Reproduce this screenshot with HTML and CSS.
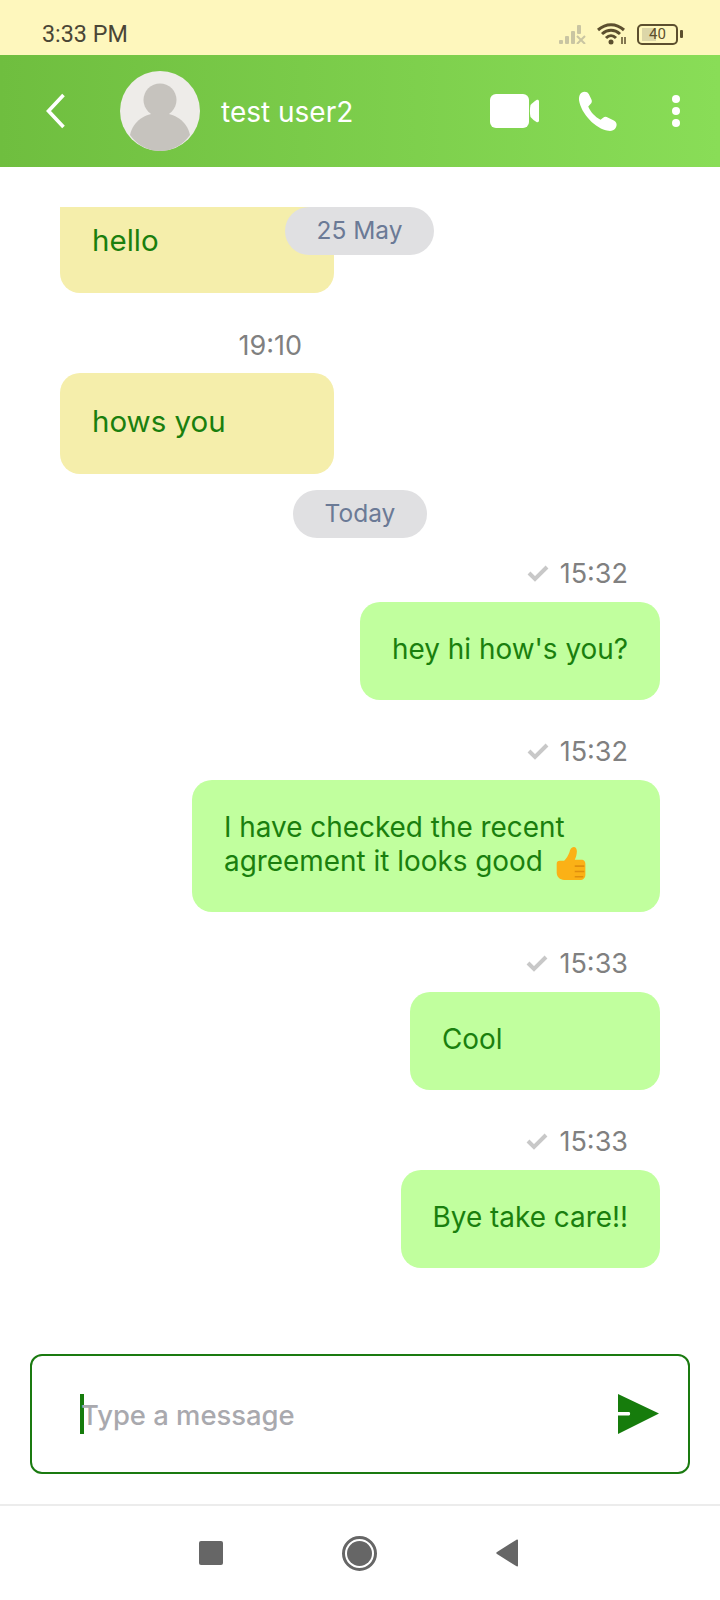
FILE: index.html
```html
<!DOCTYPE html>
<html lang="en">
<head>
    <meta charset="UTF-8">
    <meta name="viewport" content="width=device-width, initial-scale=1.0">
    <title>Chat</title>
    <link rel="stylesheet" href="styles.css">
</head>
<body>
    <div class="app">
        <!-- Status bar -->
        <div class="status">
            <span class="clock">3:33 PM</span>
            <div class="status-icons">
                <svg class="signal" width="28" height="20" viewBox="0 0 28 20">
                    <rect x="0" y="16" width="4" height="4" rx="1"/>
                    <rect x="6" y="12" width="4" height="8" rx="1"/>
                    <rect x="12" y="7" width="4" height="13" rx="1"/>
                    <rect x="18" y="1" width="4" height="9" rx="1"/>
                    <path d="M18 12l8 8M26 12l-8 8" stroke="#c9c5a2" stroke-width="2" fill="none"/>
                </svg>
                <svg class="wifi" width="30" height="22" viewBox="0 0 30 22">
                    <path d="M1 7c8-7 18-7 26 0M5 11c5.500-5 12.500-5 18 0M9 15c3-3 7-3 10 0" stroke="#5c4f2e" stroke-width="3" fill="none"/>
                    <circle cx="14" cy="19" r="2.500" fill="#5c4f2e"/>
                    <path d="M25 14v7M28 14v7" stroke="#5c4f2e" stroke-width="1.500"/>
                </svg>
                <div class="battery">
                    <div class="battery-body">
                        <div class="battery-fill"></div>
                        <span class="battery-num">40</span>
                    </div>
                    <div class="battery-tip"></div>
                </div>
            </div>
        </div>

        <!-- Header -->
        <header class="header">
            <svg class="back" width="20" height="36" viewBox="0 0 20 36">
                <path d="M17.500 2L2.500 18l15 16" stroke="#fff" stroke-width="3.600" fill="none"/>
            </svg>
            <svg class="avatar" width="80" height="80" viewBox="0 0 80 80">
                <circle cx="40" cy="40" r="40" fill="#eeece9"/>
                <circle cx="40" cy="29" r="16.500" fill="#c6c3be"/>
                <path d="M10 64c3-14 15-22 30-22s27 8 30 22c-7 10-18 16-30 16s-23-6-30-16z" fill="#c6c3be"/>
            </svg>
            <span class="name">test user2</span>
            <div class="header-icons">
                <svg width="49" height="36" viewBox="0 0 49 36">
                    <rect x="0" y="1" width="39" height="34" rx="6" fill="#fff"/>
                    <path d="M40.500 12c2-2 4-4 6-5 1.200-.6 2.500 0 2.500 1.500v19c0 1.500-1.300 2.100-2.500 1.500-2-1-4-3-6-5-.8-3.500-.8-8 0-12z" fill="#fff"/>
                </svg>
                <svg class="phone" width="41" height="41" viewBox="0 0 40 40">
                    <path d="M3 2c3-2 6-1.500 7.500 1l2.500 5c1 2 .5 3.500-1 5l-2 2c2 5 6.500 10 12 13l2.500-2c1.500-1 3-1 4.500-.2l6 3c3 1.500 3.500 5 1.500 7.500-1.500 2-4 3-7 2.500C17 37 3 22 1 9c-.3-3 .5-5.500 2-7z" fill="#fff"/>
                </svg>
                <div class="dots">
                    <span></span>
                    <span></span>
                    <span></span>
                </div>
            </div>
        </header>

        <!-- Messages -->
        <main class="chat">
            <span class="pill pill-float">25 May</span>

            <div class="msg left">
                <div class="bubble bubble-cut">hello</div>
            </div>

            <div class="msg left">
                <div class="time">19:10</div>
                <div class="bubble">hows you</div>
            </div>

            <span class="pill pill-flow">Today</span>

            <div class="msg right first">
                <div class="time"><svg class="check" width="22" height="18" viewBox="0 0 22 18"><path d="M2 9l6 6L20 3" stroke="#c8c8c8" stroke-width="4" fill="none"/></svg>15:32</div>
                <div class="bubble">hey hi how's you?</div>
            </div>

            <div class="msg right">
                <div class="time"><svg class="check" width="22" height="18" viewBox="0 0 22 18"><path d="M2 9l6 6L20 3" stroke="#c8c8c8" stroke-width="4" fill="none"/></svg>15:32</div>
                <div class="bubble">I have checked the recent agreement it looks good
                    <svg class="thumb" width="33" height="34" viewBox="0 0 30 32">
                        <path d="M2 16c0-2 1-3 3-3h4c2-2 4-5 5-8 .5-3 2-5 4-5s3 2 3 4c0 3-1 6-2 8h6c3 0 4 2 4 4v10c0 3-2 5-5 5H9c-4 0-7-3-7-7z" fill="#fbb116"/>
                        <path d="M19 18h9M19 23h9M19 28h8" stroke="#e08f0c" stroke-width="1.500" fill="none"/>
                    </svg>
                </div>
            </div>

            <div class="msg right">
                <div class="time"><svg class="check" width="22" height="18" viewBox="0 0 22 18"><path d="M2 9l6 6L20 3" stroke="#c8c8c8" stroke-width="4" fill="none"/></svg>15:33</div>
                <div class="bubble">Cool</div>
            </div>

            <div class="msg right">
                <div class="time"><svg class="check" width="22" height="18" viewBox="0 0 22 18"><path d="M2 9l6 6L20 3" stroke="#c8c8c8" stroke-width="4" fill="none"/></svg>15:33</div>
                <div class="bubble">Bye take care!!</div>
            </div>
        </main>

        <!-- Message box -->
        <div class="composer">
            <div class="input">
                <span class="caret"></span>
                <span class="placeholder">Type a message</span>
                <svg class="send" width="41" height="40" viewBox="0 0 41 40">
                    <path d="M0 0l41 19.500L0 40V21.500h11c1.500 0 1.500-3.500 0-3.500H0z" fill="#167c0c"/>
                </svg>
            </div>
        </div>

        <!-- Android nav -->
        <nav class="nav">
            <span class="nav-square"></span>
            <span class="nav-circle"><span></span></span>
            <svg width="24" height="28" viewBox="0 0 24 28">
                <path d="M22 1.500v25c0 .8-.8 1.200-1.500.8L1 15c-1-.6-1-1.400 0-2L20.500.7c.7-.4 1.500 0 1.500.8z" fill="#666"/>
            </svg>
        </nav>
    </div>
</body>
</html>
```

FILE: styles.css
```css
* {
    box-sizing: border-box;
}

body {
    margin: 0;
    background: #fff;
    font-family: Inter, "Noto Sans", sans-serif;
}

.app {
    position: relative;
    display: flex;
    flex-direction: column;
    width: 720px;
    height: 1600px;
    overflow: hidden;
}

/* Status bar */
.status {
    display: flex;
    justify-content: space-between;
    align-items: center;
    height: 55px;
    padding: 13px 37px 0 42px;
    background: #fef7bd;
    flex-shrink: 0;
}
.clock {
    font-family: Roboto, sans-serif;
    font-size: 23.300px;
    color: #4a4636;
}
.status-icons {
    display: flex;
    align-items: center;
    gap: 10px;
}
.signal {
    fill: #c9c5a2;
}
.battery {
    display: flex;
    align-items: center;
    gap: 2px;
}
.battery-body {
    position: relative;
    display: flex;
    align-items: center;
    justify-content: center;
    width: 41px;
    height: 21px;
    border: 2.500px solid #5c4f2e;
    border-radius: 5px;
}
.battery-fill {
    position: absolute;
    left: 3px;
    top: 2px;
    bottom: 2px;
    width: 14px;
    background: #dcd6a8;
}
.battery-num {
    position: relative;
    font-family: Roboto, sans-serif;
    font-size: 15px;
    color: #5c4f2e;
}
.battery-tip {
    width: 3px;
    height: 8px;
    background: #5c4f2e;
    border-radius: 1px;
}

/* Header */
.header {
    display: flex;
    align-items: center;
    height: 112px;
    padding-left: 46px;
    background: linear-gradient(90deg, #6fbe3f, #89dd57);
    flex-shrink: 0;
}
.avatar {
    margin-left: 54px;
}
.name {
    margin: 2px 0 0 21px;
    font-size: 28px;
    color: #fff;
}
.header-icons {
    display: flex;
    align-items: center;
    margin-left: auto;
    padding-right: 40px;
}
.phone {
    margin-left: 39px;
}
.dots {
    display: flex;
    flex-direction: column;
    gap: 4px;
    margin-left: 53px;
}
.dots span {
    width: 8px;
    height: 8px;
    background: #fff;
    border-radius: 50%;
}

/* Messages */
.chat {
    position: relative;
    display: flex;
    flex-direction: column;
    flex: 1;
    padding: 40px 60px 0;
}
.msg {
    display: flex;
    flex-direction: column;
    margin-top: 36px;
}
.msg:first-of-type {
    margin-top: 0;
}
.msg.left + .msg.left {
    margin-top: 37px;
}
.msg.first {
    margin-top: 20px;
}
.msg.left {
    align-items: flex-start;
}
.msg.right {
    align-items: flex-end;
}
.time {
    display: flex;
    align-items: center;
    justify-content: flex-end;
    gap: 11px;
    height: 30px;
    margin-bottom: 14px;
    padding-right: 32px;
    font-size: 27px;
    color: #808080;
}
.left .time {
    width: 274px;
    margin-bottom: 13px;
}
.bubble {
    max-width: 468px;
    padding: 30px 32px 34px;
    border-radius: 20px;
    font-size: 27.900px;
    line-height: 34px;
    color: #1a7f0e;
}
.left .bubble {
    width: 274px;
    height: 101px;
    padding: 31px 32px;
    background: #f5eeab;
    font-size: 29.500px;
}
.right .bubble {
    min-width: 250px;
    background: #c1ff9e;
}
.left .bubble-cut {
    height: 86px;
    padding-top: 16px;
    border-radius: 0 0 20px 20px;
}
.thumb {
    margin: -6px 0 -6px 3px;
    vertical-align: -4px;
}

/* Date pills */
.pill {
    display: flex;
    align-items: center;
    justify-content: center;
    height: 48px;
    padding-bottom: 2px;
    border-radius: 24px;
    background: #e0e0e2;
    font-size: 24.500px;
    color: #6b7a96;
}
.pill-float {
    position: absolute;
    top: 40px;
    left: 285px;
    width: 149px;
}
.pill-flow {
    align-self: center;
    width: 134px;
    margin-top: 16px;
}

/* Message box */
.composer {
    padding: 0 30px 30px;
    flex-shrink: 0;
}
.input {
    display: flex;
    align-items: center;
    height: 120px;
    padding: 0 29px 0 48px;
    border: 2px solid #1a7a10;
    border-radius: 12px;
}
.caret {
    width: 4px;
    height: 40px;
    background: #167c0c;
}
.placeholder {
    margin: 1px 0 0 -3px;
    font-size: 27.400px;
    font-weight: 500;
    color: #a9a9ae;
}
.send {
    margin-left: auto;
}

/* Android nav */
.nav {
    display: flex;
    align-items: center;
    justify-content: center;
    gap: 119px;
    height: 96px;
    padding-right: 2px;
    border-top: 2px solid #ececec;
    flex-shrink: 0;
}
.nav-square {
    width: 24px;
    height: 24px;
    background: #666;
    border-radius: 2px;
}
.nav-circle {
    display: flex;
    align-items: center;
    justify-content: center;
    width: 35px;
    height: 35px;
    border: 3px solid #666;
    border-radius: 50%;
}
.nav-circle span {
    width: 25px;
    height: 25px;
    background: #666;
    border-radius: 50%;
}
```
